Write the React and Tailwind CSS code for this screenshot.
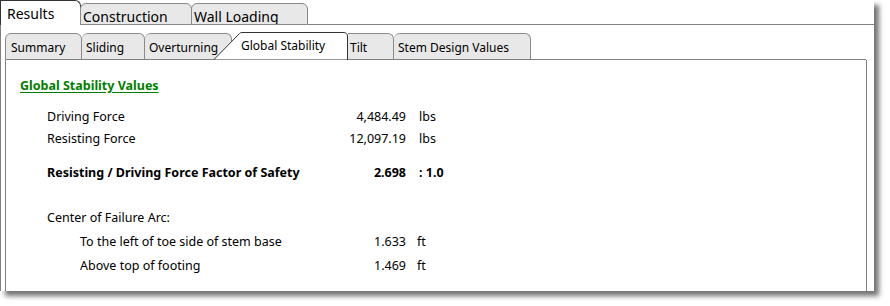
const topTabs = [
  { label: "Construction", w: "w-[112px]" },
  { label: "Wall Loading", w: "w-[117px]" },
];

const Row = ({ label, value, unit, bold, sub, h = "h-[22px]" }) => (
  <div className={`flex items-center ${h} ${bold ? "font-bold" : ""}`}>
    <div className={`flex w-[386px] ${sub ? "pl-[60px]" : "pl-[27px]"}`}>
      <span className="flex-1">{label}</span>
      <span className="text-right">{value}</span>
    </div>
    {unit && <span className={sub ? "ml-[11px]" : "ml-[13px]"}>{unit}</span>}
  </div>
);

export default function App() {
  return (
    <div className="w-[890px] h-[306px] bg-white text-black" style={{ fontFamily: '"Noto Sans", "Open Sans", sans-serif' }}>
      <div className="w-[874px] h-[291px] bg-white flex flex-col overflow-hidden shadow-[5px_5px_5px_rgba(0,0,0,0.55)]">
        {/* top tabs */}
        <div className="flex items-end h-[25px] shrink-0">
          <div className="w-[81px] h-[25px] border border-b-0 border-[#333] rounded-tr-[6px] bg-white pl-[6px] text-[14px] leading-[25px]">
            Results
          </div>
          {topTabs.map((t) => (
            <div
              key={t.label}
              className={`${t.w} h-[22px] border border-[#8a8a8a] rounded-t-[6px] bg-[#e8e8e8] -ml-px first:ml-0 pl-[2px] text-[14px] leading-[25px] overflow-hidden`}
            >
              {t.label}
            </div>
          ))}
          <div className="flex-1 border-b border-[#808080]" />
        </div>

        {/* body */}
        <div className="flex-1 border-l border-[#808080] pl-[4px] pr-[7px] pt-[7px]">
          <div className="flex items-end h-[28px]">
            <div className="w-[77px] h-[27px] border border-[#8a8a8a] rounded-t-[6px] bg-[#e8e8e8] pl-[5px] text-[12px] leading-[28px]">Summary</div>
            <div className="w-[63px] h-[27px] border border-l-0 border-[#8a8a8a] rounded-t-[6px] bg-[#e8e8e8] pl-[4px] text-[12px] leading-[28px]">Sliding</div>
            <div className="w-[87px] h-[27px] border border-l-0 border-[#8a8a8a] rounded-t-[6px] bg-[#e8e8e8] pl-[4px] text-[12px] leading-[28px]">Overturning</div>
            <div className="relative -ml-[19px] w-[135px] h-[28px] text-[12px] leading-[28px] pl-[28px] z-10">
              <svg className="absolute inset-0" width="135" height="28" viewBox="0 0 135 28">
                <path d="M0.5 28 L26.5 1.5 Q27.5 0.5 29 0.5 L130 0.5 Q134.5 0.5 134.5 4 L134.5 28 Z" fill="#fff" stroke="#333" />
              </svg>
              <span className="relative">Global Stability</span>
            </div>
            <div className="w-[46px] h-[27px] border border-l-0 border-[#8a8a8a] rounded-tr-[6px] bg-[#e8e8e8] pl-[2px] text-[12px] leading-[28px]">Tilt</div>
            <div className="w-[137px] h-[27px] border border-l-0 border-[#8a8a8a] rounded-t-[6px] bg-[#e8e8e8] pl-[4px] text-[12px] leading-[28px]">Stem Design Values</div>
          </div>
          <div className="h-[400px] border border-t-0 border-[#808080] relative">
            <div className="absolute top-[-1px] left-[0px] right-[0px] h-px bg-[#808080]" />
            <div className="absolute top-[-1px] left-[207px] w-[133px] h-px bg-white" />
            <div className="pl-[14px] pt-[18px] text-[12.5px]">
              <div className="h-[16px] leading-[16px] font-bold text-[#008000] underline underline-offset-2">
                <span>Global Stability Values</span>
              </div>
              <div className="h-[12px]" />
              <Row label="Driving Force" value="4,484.49" unit="lbs" />
              <Row label="Resisting Force" value="12,097.19" unit="lbs" />
              <div className="h-[12px]" />
              <Row label="Resisting / Driving Force Factor of Safety" value="2.698" unit=": 1.0" bold />
              <div className="h-[22px]" />
              <Row label="Center of Failure Arc:" h="h-[24px]" />
              <Row label="To the left of toe side of stem base" value="1.633" unit="ft" sub h="h-[24px]" />
              <Row label="Above top of footing" value="1.469" unit="ft" sub h="h-[25px]" />
            </div>
          </div>
        </div>
      </div>
    </div>
  );
}
